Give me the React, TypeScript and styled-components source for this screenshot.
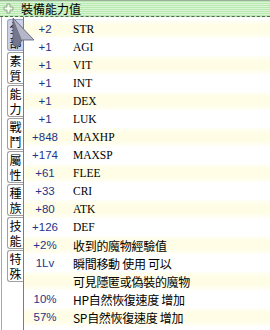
import React from "react";
import styled, { createGlobalStyle } from "styled-components";

const Global = createGlobalStyle`
  html, body { margin: 0; padding: 0; background: #ffffff; }
  body { width: 270px; height: 330px; overflow: hidden; }
  #root { width: 270px; height: 330px; }
`;

const Panel = styled.div`
  position: relative;
  width: 270px;
  height: 330px;
  display: flex;
  flex-direction: column;
  background: #ffffff;
  overflow: hidden;
`;

const Header = styled.div`
  height: 17px;
  box-sizing: border-box;
  border-top: 1px solid #9cb09a;
  border-bottom: 1px dashed #4f6a4a;
  background: repeating-linear-gradient(
    to bottom,
    #b9e8b2 0px,
    #b9e8b2 1px,
    #d9f5d3 1px,
    #d9f5d3 2px
  );
  display: flex;
  align-items: center;
  gap: 7px;
  padding-left: 3px;
`;

const Title = styled.span`
  font-family: "Noto Sans CJK TC", sans-serif;
  font-size: 12px;
  line-height: 14px;
  color: #000000;
`;

const Body = styled.div`
  flex: 1;
  display: flex;
  min-height: 0;
`;

const TabStrip = styled.div`
  width: 16px;
  margin-left: 1px;
  border-left: 1px solid #a8a8a8;
  border-right: 1px solid #7c7c7c;
  padding: 2px 0 0 5px;
  display: flex;
  flex-direction: column;
  gap: 1px;
`;

const Tab = styled.div<{ $active?: boolean }>`
  width: 16px;
  height: 32px;
  box-sizing: border-box;
  border: 1px solid ${(p) => (p.$active ? "#9aa4c4" : "#a0a0a0")};
  border-right: none;
  border-radius: 3px 0 0 3px;
  background: ${(p) => (p.$active ? "#c9d0ea" : "#ffffff")};
  display: flex;
  flex-direction: column;
  align-items: center;
  justify-content: center;
`;

const TabChar = styled.span`
  display: block;
  font-family: "Noto Sans CJK TC", sans-serif;
  font-size: 12px;
  line-height: 15px;
  color: #000000;
`;

const List = styled.div`
  flex: 1;
  padding-top: 3px;
  display: flex;
  flex-direction: column;
`;

const Row = styled.div<{ $alt: boolean }>`
  height: 18px;
  display: grid;
  grid-template-columns: 42px 1fr;
  align-items: center;
  background: ${(p) =>
    p.$alt
      ? "linear-gradient(to bottom, #fffff6 0%, #fffde6 30%, #fffde6 70%, #fffff6 100%)"
      : "#ffffff"};
`;

const Value = styled.span`
  text-align: center;
  font-family: "Liberation Sans", sans-serif;
  font-size: 11.5px;
  color: #22348a;
`;

const Label = styled.span`
  padding-left: 7px;
  font-family: "Liberation Serif", "Noto Sans CJK TC", serif;
  font-size: 11.5px;
  color: #000000;
  white-space: nowrap;
`;

const CjkLabel = styled(Label)`
  font-family: "Noto Sans CJK TC", sans-serif;
  font-size: 12px;
  letter-spacing: -0.3px;
`;

const Cursor = styled.svg`
  position: absolute;
  left: 12px;
  top: 17px;
`;

const PlusIcon = () => (
  <svg width="11" height="11" viewBox="0 0 11 11">
    <path
      d="M4 1h3v3h3v3H7v3H4V7H1V4h3z"
      fill="#f6fff2"
      stroke="#8ea889"
      strokeWidth="1"
    />
  </svg>
);

type Entry = { v: string; l: string; cjk?: boolean };

const entries: Entry[] = [
  { v: "+2", l: "STR" },
  { v: "+1", l: "AGI" },
  { v: "+1", l: "VIT" },
  { v: "+1", l: "INT" },
  { v: "+1", l: "DEX" },
  { v: "+1", l: "LUK" },
  { v: "+848", l: "MAXHP" },
  { v: "+174", l: "MAXSP" },
  { v: "+61", l: "FLEE" },
  { v: "+33", l: "CRI" },
  { v: "+80", l: "ATK" },
  { v: "+126", l: "DEF" },
  { v: "+2%", l: "收到的魔物經驗值", cjk: true },
  { v: "1Lv", l: "瞬間移動 使用 可以", cjk: true },
  { v: "", l: "可見隱匿或偽裝的魔物", cjk: true },
  { v: "10%", l: "HP自然恢復速度 增加", cjk: true },
  { v: "57%", l: "SP自然恢復速度 增加", cjk: true },
];

const tabs = ["全部", "素質", "能力", "戰鬥", "屬性", "種族", "技能", "特殊"];

export default function App() {
  return (
    <>
      <Global />
      <Panel>
        <Header>
          <PlusIcon />
          <Title>裝備能力值</Title>
        </Header>
        <Body>
          <TabStrip>
            {tabs.map((t, i) => (
              <Tab key={t} $active={i === 0}>
                <TabChar>{t[0]}</TabChar>
                <TabChar>{t[1]}</TabChar>
              </Tab>
            ))}
          </TabStrip>
          <List>
            {entries.map((e, i) => (
              <Row key={i} $alt={i % 2 === 0}>
                <Value>{e.v}</Value>
                {e.cjk ? <CjkLabel>{e.l}</CjkLabel> : <Label>{e.l}</Label>}
              </Row>
            ))}
          </List>
        </Body>
        <Cursor width="24" height="32" viewBox="0 0 24 32">
          <polygon points="1,1 22,23 10,23 6,30 1,28" fill="#8e8fa6" />
          <polygon points="1,1 10,23 6,30 1,28" fill="#74768e" />
          <polygon points="1,1 22,23 10,23" fill="#b5b6c8" />
          <polyline points="1,1 22,23 10,23 6,30 1,28 1,1" fill="none" stroke="#5c5e74" strokeWidth="0.8" />
        </Cursor>
      </Panel>
    </>
  );
}
